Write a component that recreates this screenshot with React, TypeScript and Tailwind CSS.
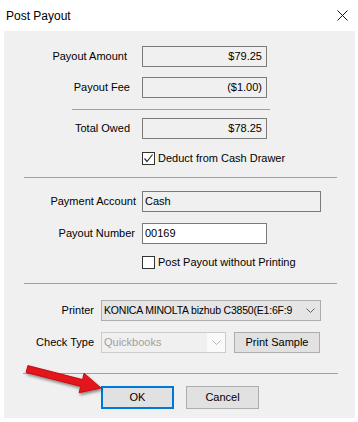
import type { ReactNode } from "react";

function Chevron({ color = "#606060" }: { color?: string }) {
  return (
    <svg width="9" height="6" viewBox="0 0 9 6" fill="none" stroke={color} strokeWidth="1">
      <path d="M0.5 0.5L4.5 4.5L8.5 0.5" />
    </svg>
  );
}

function CheckBox({ checked }: { checked?: boolean }) {
  return (
    <span className="flex h-[13px] w-[13px] shrink-0 items-center justify-center border border-[#333333] bg-white">
      {checked && (
        <svg width="11" height="11" viewBox="0 0 11 11" fill="none" stroke="#333333" strokeWidth="1.2">
          <path d="M1.5 5.5L4 8.5L9.5 1.5" />
        </svg>
      )}
    </span>
  );
}

function Row({ label, labelWidth, gap, children, className = "" }: { label: string; labelWidth: string; gap: string; children: ReactNode; className?: string }) {
  return (
    <div className={`flex h-[21px] items-center ${className}`}>
      <span className={`${labelWidth} ${gap} shrink-0 whitespace-nowrap text-right`}>{label}</span>
      {children}
    </div>
  );
}

function ReadOnly({ value }: { value: string }) {
  return (
    <div className="flex h-[21px] w-[125px] items-center justify-end border border-[#7a7a7a] bg-[#f0f0f0] pr-[4px]">
      {value}
    </div>
  );
}

function Divider({ className }: { className: string }) {
  return <div className={`h-px bg-[#a0a0a0] ${className}`} />;
}

export default function App() {
  return (
    <div className="relative h-[422px] w-[358px] overflow-hidden bg-white font-['Liberation_Sans',Arial,sans-serif] text-[11px] text-black">
      <div className="flex h-[31px] items-center justify-between pl-[6px] pr-[10px]">
        <span className="text-[12px]">Post Payout</span>
        <svg width="11" height="11" viewBox="0 0 11 11" stroke="#111111" strokeWidth="1">
          <path d="M0.5 0.5L10.5 10.5M10.5 0.5L0.5 10.5" />
        </svg>
      </div>

      <div className="mx-[4px] h-[387px] w-[351px] bg-[#f0f0f0]">
        <div className="flex flex-col pt-[15px]">
          <Row label="Payout Amount" labelWidth="w-[123px]" gap="mr-[15px]">
            <ReadOnly value="$79.25" />
          </Row>
          <Row label="Payout Fee" labelWidth="w-[126px]" gap="mr-[12px]" className="mt-[10px]">
            <ReadOnly value="($1.00)" />
          </Row>
          <Divider className="ml-[68px] mt-[11px] w-[198px]" />
          <Row label="Total Owed" labelWidth="w-[126px]" gap="mr-[12px]" className="mt-[8px]">
            <ReadOnly value="$78.25" />
          </Row>
          <label className="ml-[138px] mt-[13px] flex h-[13px] items-center gap-[3px]">
            <CheckBox checked />
            <span>Deduct from Cash Drawer</span>
          </label>

          <Divider className="ml-[20px] mt-[12px] w-[313px]" />

          <Row label="Payment Account" labelWidth="w-[132px]" gap="mr-[6px]" className="mt-[13px]">
            <div className="flex h-[21px] w-[179px] items-center border border-[#7a7a7a] bg-[#f0f0f0] pl-[2px]">Cash</div>
          </Row>
          <Row label="Payout Number" labelWidth="w-[131px]" gap="mr-[7px]" className="mt-[11px]">
            <div className="flex h-[21px] w-[125px] items-center border border-[#7a7a7a] bg-white pl-[2px]">00169</div>
          </Row>
          <label className="ml-[138px] mt-[12px] flex h-[13px] items-center gap-[3px]">
            <CheckBox />
            <span>Post Payout without Printing</span>
          </label>

          <Divider className="ml-[20px] mt-[14px] w-[313px]" />

          <Row label="Printer" labelWidth="w-[90px]" gap="mr-[7px]" className="mt-[16px]">
            <div className="flex h-[21px] w-[220px] items-center border border-[#adadad] bg-[#e5e5e5] pl-[2px] pr-[5px]">
              <span className="whitespace-nowrap text-[10.5px] tracking-[-0.2px]">KONICA MINOLTA bizhub C3850(E1:6F:9</span>
              <span className="ml-auto"><Chevron /></span>
            </div>
          </Row>
          <Row label="Check Type" labelWidth="w-[90px]" gap="mr-[7px]" className="mt-[11px]">
            <div className="flex h-[21px] w-[125px] items-center border border-[#cccccc] bg-[#f0f0f0]">
              <span className="pl-[2px] text-[#a0a0a0]">Quickbooks</span>
              <span className="ml-auto flex h-full w-[18px] items-center justify-center bg-[#fafafa]">
                <Chevron color="#b5b5b5" />
              </span>
            </div>
            <button className="ml-[8px] h-[21px] w-[86px] border border-[#adadad] bg-[#e1e1e1]">Print Sample</button>
          </Row>

          <Divider className="ml-[19px] mt-[20px] w-[315px]" />

          <div className="ml-[97px] mt-[12px] flex gap-[12px]">
            <button className="h-[23px] w-[73px] border-2 border-[#0078d7] bg-[#e1e1e1]">OK</button>
            <button className="h-[23px] w-[73px] border border-[#adadad] bg-[#e1e1e1]">Cancel</button>
          </div>
        </div>
      </div>

      <svg className="absolute left-0 top-0" width="358" height="422" viewBox="0 0 358 422">
        <defs>
          <filter id="sh" x="-20%" y="-50%" width="140%" height="200%">
            <feDropShadow dx="1" dy="2" stdDeviation="1.5" floodColor="#000" floodOpacity="0.45" />
          </filter>
        </defs>
        <polygon
          points="26.1,372.4 80.7,386.4 79.1,392.7 101,388 84.1,373.3 82.5,379.6 27.9,365.6"
          fill="#e3141b"
          stroke="#c40f15"
          strokeWidth="1"
          strokeLinejoin="round"
          filter="url(#sh)"
        />
      </svg>
    </div>
  );
}
